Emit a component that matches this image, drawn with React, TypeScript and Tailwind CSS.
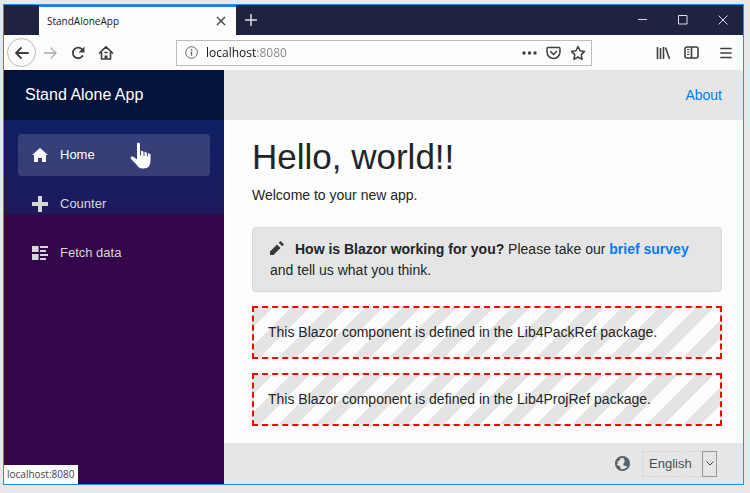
import type { ReactNode } from "react";

function NavItem({ label, active, children }: { label: string; active?: boolean; children: ReactNode }) {
  return (
    <li>
      <a
        href="#"
        className={`flex h-[42px] items-center gap-3 rounded px-[14px] text-[13px] ${
          active ? "bg-white/15 text-white" : "text-[#d7d7d7]"
        }`}
      >
        {children}
        {label}
      </a>
    </li>
  );
}

function LibBox({ name }: { name: string }) {
  return (
    <div className="mt-[14px] border-2 border-dashed border-[#ff0000] bg-[repeating-linear-gradient(-45deg,#fdfdfd_0px,#fdfdfd_13px,#e4e4e4_13px,#e4e4e4_26px)] p-[14px] leading-[21px]">
      This Blazor component is defined in the {name} package.
    </div>
  );
}

export default function App() {
  return (
    <div className="h-screen bg-[#e8e8e8] pt-1 pr-[6px] pb-2 pl-[3px] font-['Liberation_Sans',Arial,sans-serif] text-[#212529]">
      <div className="relative flex h-full flex-col border border-[#2b8fe0] bg-[#fdfdfd]">
        {/* title bar */}
        <div className="flex h-[30px] shrink-0 items-center bg-[#202340] pl-[35px] text-[#dcdce4]">
          <div className="flex h-full w-[197px] items-center justify-between border-t-2 border-[#0a84ff] bg-[#fdfdfd] px-2 font-['Open_Sans',sans-serif] text-[10px] text-[#202020]">
            StandAloneApp
            <button aria-label="Close tab" className="p-[2px]">
              <svg width="10" height="10" viewBox="0 0 10 10" stroke="#444" strokeWidth="1.4">
                <path d="M1 1l8 8M9 1L1 9" />
              </svg>
            </button>
          </div>
          <button aria-label="New tab" className="ml-2">
            <svg width="14" height="14" viewBox="0 0 14 14" stroke="currentColor" strokeWidth="1.5">
              <path d="M7 1v12M1 7h12" />
            </svg>
          </button>
          <div className="ml-auto flex items-center gap-[30px] pr-[15px]">
            <button aria-label="Minimize">
              <svg width="10" height="10" viewBox="0 0 10 10" stroke="currentColor">
                <path d="M0 4.5h9" />
              </svg>
            </button>
            <button aria-label="Maximize">
              <svg width="10" height="10" viewBox="0 0 10 10" stroke="currentColor" fill="none">
                <path d="M.5.5h8.500v8.500H.5z" />
              </svg>
            </button>
            <button aria-label="Close">
              <svg width="10" height="10" viewBox="0 0 10 10" stroke="currentColor">
                <path d="M.5.5l9 9M9.500.5l-9 9" />
              </svg>
            </button>
          </div>
        </div>

        {/* toolbar */}
        <div className="flex h-[35px] shrink-0 items-center pr-[11px] pl-[3px] text-[#3f3f43]">
          <button aria-label="Back" className="flex size-[29px] items-center justify-center rounded-full border border-[#b8b8b8]">
            <svg width="16" height="16" viewBox="0 0 16 16" fill="none" stroke="currentColor" strokeWidth="1.8" strokeLinecap="round" strokeLinejoin="round">
              <path d="M14 8H2M7 3L2 8l5 5" />
            </svg>
          </button>
          <button aria-label="Forward" className="ml-[6px] text-[#ababab]">
            <svg width="16" height="16" viewBox="0 0 16 16" fill="none" stroke="currentColor" strokeWidth="1.3" strokeLinecap="round" strokeLinejoin="round">
              <path d="M2 8h12M9 3l5 5-5 5" />
            </svg>
          </button>
          <button aria-label="Reload" className="ml-3">
            <svg width="16" height="16" viewBox="0 0 16 16" fill="none" stroke="currentColor" strokeWidth="1.8" strokeLinecap="round">
              <path d="M12.500 11A5.300 5.300 0 1 1 12.200 4.500" />
              <path d="M14.500 1.500v6h-6z" fill="currentColor" stroke="none" />
            </svg>
          </button>
          <button aria-label="Home page" className="ml-3">
            <svg width="16" height="16" viewBox="0 0 16 16" fill="none" stroke="currentColor" strokeWidth="1.7" strokeLinecap="round" strokeLinejoin="round">
              <path d="M1.500 8L8 1.800 14.500 8M3.500 7.500V14h9V7.500" />
              <path d="M8 14v-3.500" strokeWidth="3" strokeLinecap="butt" />
              <path d="M7 7.500h2" />
            </svg>
          </button>
          <div className="ml-[62px] flex h-[26px] w-[416px] items-center border border-[#bdbdbd] pr-[5px] pl-2">
            <svg width="13" height="13" viewBox="0 0 13 13" fill="none" stroke="#66666a" className="shrink-0">
              <circle cx="6.500" cy="6.500" r="5.800" />
              <path d="M6.500 5.500v4.300M6.500 3v1.400" strokeWidth="1.4" />
            </svg>
            <input
              aria-label="Address"
              defaultValue="localhost:8080"
              className="ml-2 block min-w-0 flex-1 bg-[linear-gradient(90deg,#111_51px,#858585_51px)] bg-clip-text font-['Open_Sans',sans-serif] text-xs text-transparent outline-none"
            />
            <div className="flex items-center gap-[9px]">
              <button aria-label="Page actions">
                <svg width="15" height="4" viewBox="0 0 15 4" fill="currentColor">
                  <circle cx="2" cy="2" r="1.700" />
                  <circle cx="7.500" cy="2" r="1.700" />
                  <circle cx="13" cy="2" r="1.700" />
                </svg>
              </button>
              <button aria-label="Save to Pocket">
                <svg width="15" height="14" viewBox="0 0 15 14" fill="none" stroke="currentColor" strokeWidth="1.500" strokeLinejoin="round" strokeLinecap="round">
                  <path d="M2 1.500h11q1 0 1 1V6a6.500 6.500 0 0 1-13 0V2.500q0-1 1-1z" />
                  <path d="M4.500 5.500l3 3 3-3" />
                </svg>
              </button>
              <button aria-label="Bookmark">
                <svg width="16" height="16" viewBox="0 0 16 16" fill="none" stroke="currentColor" strokeWidth="1.500" strokeLinejoin="round">
                  <path d="M8 1.500l2 4.300 4.600.6-3.400 3.200.9 4.700L8 12l-4.100 2.300.9-4.700L1.400 6.400 6 5.800z" />
                </svg>
              </button>
            </div>
          </div>
          <div className="ml-auto flex items-center gap-[13px]">
            <button aria-label="Library">
              <svg width="15" height="14" viewBox="0 0 15 14" fill="none" stroke="currentColor" strokeWidth="1.600">
                <path d="M1.500 1v12M4.500 2v11M7.500 1v12M9.500 1.500L13.500 13" />
              </svg>
            </button>
            <button aria-label="Sidebars">
              <svg width="15" height="13" viewBox="0 0 15 13" fill="none" stroke="currentColor" strokeWidth="1.600">
                <rect x="1" y="1" width="13" height="11" rx="2" />
                <path d="M7.500 1v11" />
                <path d="M3 3.500h2.500M3 6h2.500M3 8.500h2.500" strokeWidth="1" />
              </svg>
            </button>
            <button aria-label="Menu" className="ml-2">
              <svg width="12" height="12" viewBox="0 0 12 12" stroke="currentColor" strokeWidth="1.700" strokeLinecap="round">
                <path d="M1 1.500h10M1 6h10M1 10.500h10" />
              </svg>
            </button>
          </div>
        </div>

        {/* page */}
        <div className="flex min-h-0 flex-1">
          <aside className="w-[220px] shrink-0 bg-[linear-gradient(180deg,#0a2065_0px,#0f2064_50px,#1d1a5c_144px,#330749_145px)]">
            <div className="flex h-[50px] items-center bg-[#03133b] px-[21px] text-base text-white">
              <a href="#">Stand Alone App</a>
            </div>
            <ul className="flex flex-col gap-[7px] px-[14px] pt-[14px]">
              <NavItem label="Home" active>
                <svg width="16" height="16" viewBox="0 0 8 8" fill="currentColor">
                  <path d="M4 .5l-4 3.500h1v3.500h2v-2h2v2h2V4h1z" />
                </svg>
              </NavItem>
              <NavItem label="Counter">
                <svg width="16" height="16" viewBox="0 0 8 8" fill="currentColor">
                  <path d="M3 0v3H0v2h3v3h2V5h3V3H5V0z" />
                </svg>
              </NavItem>
              <NavItem label="Fetch data">
                <svg width="16" height="14" viewBox="0 0 8 7" fill="currentColor">
                  <path d="M0 0v3h3.300V0zM4 0v1h4V0zM4 2v1h3V2zM0 4v3h3.300V4zM4 4v1h4V4zM4 6v1h3V6z" />
                </svg>
              </NavItem>
            </ul>
          </aside>

          <div className="flex min-w-0 flex-1 flex-col">
            <header className="flex h-[50px] shrink-0 items-center justify-end bg-[#e6e6e6] px-[21px]">
              <a href="#" className="text-sm text-[#007bff]">About</a>
            </header>
            <main className="flex-1 pr-[21px] pl-[28px] text-sm">
              <h1 className="pt-[14px] text-[35px] leading-[45px]">Hello, world!!</h1>
              <p className="mt-[5px] leading-[22px]">Welcome to your new app.</p>
              <div className="mt-[21px] rounded border border-[#d9d9d9] bg-[#e5e5e5] px-[17px] pt-[11px] pb-[10px] leading-[21px]">
                <svg width="14" height="14" viewBox="0 0 8 8" fill="#343a40" className="mr-[11px] inline-block align-[-1px]">
                  <path d="M6 0L5 1l2 2 1-1zM4 2L0 6v2h2l4-4z" />
                </svg>
                <strong>How is Blazor working for you?</strong> Please take our{" "}
                <a href="#" className="font-bold text-[#007bff]">brief survey</a> and tell us what you think.
              </div>
              <LibBox name="Lib4PackRef" />
              <LibBox name="Lib4ProjRef" />
            </main>
            <footer className="flex h-[41px] shrink-0 items-center justify-end gap-3 bg-[#e6e6e6] pr-[26px]">
              <svg width="15" height="15" viewBox="0 0 8 8" fill="#56626c">
                <path d="M4 0c-2.200 0-4 1.800-4 4s1.800 4 4 4 4-1.800 4-4-1.800-4-4-4zm0 1c.33 0 .64.09.94.19-.21.2-.45.38-.41.56.04.18.69.13.69.5 0 .27-.42.35-.13.66.35.35-.64.98-.66 1.440-.03.83.84.97 1.530.97.42 0 .53.2.5.44-.54.77-1.460 1.250-2.470 1.250-.38 0-.73-.09-1.060-.22.22-.44-.28-1.310-.75-1.590-.23-.23-.72-.14-1-.25-.09-.27-.18-.54-.19-.84.03-.05.08-.09.16-.09.19 0 .45.38.59.34.18-.04-.74-1.310-.31-1.560.2-.12.6.39.47-.16-.12-.51.36-.28.66-.41.26-.11.45-.41.13-.59-.06-.03-.13-.1-.22-.19.45-.27.97-.44 1.530-.44z" />
              </svg>
              <div className="relative">
                <select aria-label="Language" className="block h-[26px] w-[75px] appearance-none border border-dashed border-[#d4d4d4] pl-[6px] text-[13px] text-[#495057]">
                  <option>English</option>
                </select>
                <span className="pointer-events-none absolute inset-y-0 right-0 flex w-[15px] items-center justify-center border border-[#999]">
                  <svg width="8" height="5" viewBox="0 0 8 5" fill="none" stroke="#444">
                    <path d="M.5.5L4 4 7.500.5" />
                  </svg>
                </span>
              </div>
            </footer>
          </div>
        </div>

        {/* status hint */}
        <div className="absolute bottom-0 left-0 h-[19px] bg-[#fdfdfd] pr-1 pl-[3px] font-['Open_Sans',sans-serif] text-[10px] leading-[19px] text-[#444]">
          localhost:8080
        </div>

        {/* hand pointer */}
        <svg width="22" height="28" viewBox="0 0 22 28" className="pointer-events-none absolute top-[137px] left-[126px]">
          <path
            d="M7 2q0-1.500 1.500-1.500T10 2v7q2.500-1 3.500 1 2.300-.7 3.300 1 2.700-.5 3.700 1.500V19q0 7.500-7 7.500-5 .3-7-4L1 17q-1-2 .5-2.500 1.500-.3 3 1l2.500 2z"
            fill="#fff"
          />
          <path d="M10.500 8.500v5M14 9.500v4.500M17.300 10.500v4" stroke="#2a2c63" strokeWidth=".9" />
        </svg>
      </div>
    </div>
  );
}
